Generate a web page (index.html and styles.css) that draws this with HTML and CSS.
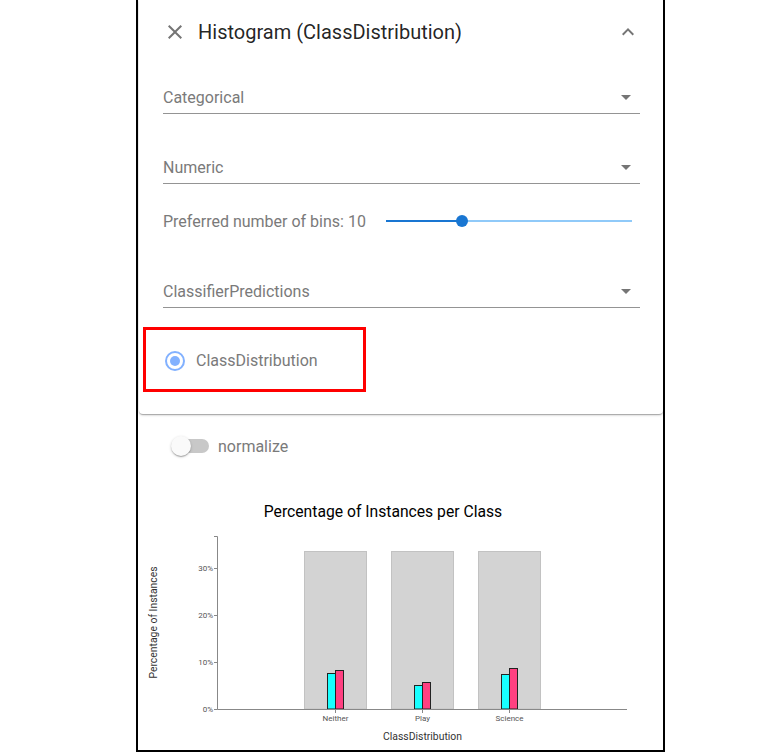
FILE: index.html
```html
<!DOCTYPE html>
<html>
<head>
<meta charset="utf-8">
<link rel="stylesheet" href="styles.css">
</head>
<body>
<div class="frame">
  <div class="card">
    <div class="header">
      <svg class="icon" viewBox="0 0 24 24"><path d="M19 6.41L17.59 5 12 10.59 6.41 5 5 6.41 10.59 12 5 17.59 6.41 19 12 13.41 17.59 19 19 17.59 13.41 12z"/></svg>
      <div class="title">Histogram (ClassDistribution)</div>
      <svg class="icon chevron" viewBox="0 0 24 24"><path d="M12 8l-6 6 1.41 1.41L12 10.83l4.59 4.58L18 14z"/></svg>
    </div>
    <div class="select first">
      <span class="select-label">Categorical</span>
      <svg class="icon arrow" viewBox="0 0 24 24"><path d="M7 10l5 5 5-5z"/></svg>
    </div>
    <div class="select second">
      <span class="select-label">Numeric</span>
      <svg class="icon arrow" viewBox="0 0 24 24"><path d="M7 10l5 5 5-5z"/></svg>
    </div>
    <div class="slider-row">
      <span class="slider-label">Preferred number of bins: 10</span>
      <div class="slider">
        <div class="track-active"></div>
        <div class="track-rest"></div>
        <div class="thumb"></div>
      </div>
    </div>
    <div class="select third">
      <span class="select-label">ClassifierPredictions</span>
      <svg class="icon arrow" viewBox="0 0 24 24"><path d="M7 10l5 5 5-5z"/></svg>
    </div>
    <div class="radio-box">
      <span class="radio"><span class="radio-dot"></span></span>
      <span class="radio-label">ClassDistribution</span>
    </div>
  </div>

  <div class="toggle-row">
    <div class="switch">
      <span class="switch-track"></span>
      <span class="switch-thumb"></span>
    </div>
    <span class="toggle-label">normalize</span>
  </div>

  <svg class="chart" width="525" height="270" viewBox="138 480 525 270">
    <text class="chart-title" x="383" y="518" text-anchor="middle">Percentage of Instances per Class</text>
    <text class="axis-title" x="0" y="0" text-anchor="middle" transform="translate(157 623.5) rotate(-90)">Percentage of Instances</text>

    <g class="bg-bars">
      <rect x="304.5" y="552.5" width="62" height="157.5"/>
      <rect x="391.5" y="552.5" width="62" height="157.5"/>
      <rect x="478.5" y="552.5" width="62" height="157.5"/>
    </g>

    <g class="bars">
      <rect class="cyan" x="327.5" y="674.5" width="8" height="35.5"/>
      <rect class="pink" x="335.5" y="671.5" width="8" height="38.5"/>
      <rect class="cyan" x="414.5" y="686.5" width="8" height="23.5"/>
      <rect class="pink" x="422.5" y="683.5" width="8" height="26.5"/>
      <rect class="cyan" x="501.5" y="675.5" width="8" height="34.5"/>
      <rect class="pink" x="509.5" y="669.5" width="8" height="40.5"/>
    </g>

    <path class="axis" d="M214 537.5H217.5V710.5H214"/>
    <path class="axis" d="M217.5 710.5H627"/>
    <path class="axis" d="M214 569.5H217.5M214 616.5H217.5M214 663.5H217.5"/>
    <path class="axis" d="M335.5 710.5V714M422.5 710.5V714M509.5 710.5V714"/>

    <g class="tick-labels" text-anchor="end">
      <text x="213" y="572">30%</text>
      <text x="213" y="619">20%</text>
      <text x="213" y="666">10%</text>
      <text x="213" y="713">0%</text>
    </g>
    <g class="tick-labels" text-anchor="middle">
      <text x="335.5" y="721.5">Neither</text>
      <text x="422.5" y="721.5">Play</text>
      <text x="509.5" y="721.5">Science</text>
    </g>
    <text class="axis-title" x="422.5" y="740.5" text-anchor="middle">ClassDistribution</text>
  </svg>
</div>
</body>
</html>
```

FILE: styles.css
```css
html, body {
  margin: 0;
  padding: 0;
  background: #ffffff;
  font-family: Roboto, "Liberation Sans", sans-serif;
}

.frame {
  margin-left: 136px;
  width: 525px;
  height: 750px;
  border-left: 2px solid #000;
  border-right: 2px solid #000;
  border-bottom: 2px solid #000;
  overflow: hidden;
}

.card {
  margin-left: 1px;
  width: 524px;
  box-sizing: border-box;
  padding: 0 23px 22px 24px;
  background: #fff;
  border-radius: 0 0 4px 4px;
  box-shadow: 0 1px 3px rgba(0,0,0,0.2), 0 1px 1px rgba(0,0,0,0.14), 0 2px 1px -1px rgba(0,0,0,0.12);
}

.header {
  height: 64px;
  display: flex;
  align-items: center;
}

.icon {
  width: 24px;
  height: 24px;
  fill: #757575;
  flex: none;
}

.title {
  margin-left: 11px;
  font-size: 20px;
  line-height: 24px;
  color: rgba(0,0,0,0.87);
  flex: 1;
}

.select {
  height: 32px;
  display: flex;
  align-items: center;
  border-bottom: 1px solid #949494;
}

.select.first { margin-top: 17px; }
.select.second { margin-top: 37px; }
.select.third { margin-top: 42px; }

.select-label {
  flex: 1;
  font-size: 16px;
  color: #7a7a7a;
}

.arrow {
  margin-right: 2px;
}

.slider-row {
  margin-top: 25px;
  height: 24px;
  display: flex;
  align-items: center;
}

.slider-label {
  font-size: 16px;
  color: #7a7a7a;
}

.slider {
  margin-left: auto;
  margin-right: 8px;
  width: 246px;
  height: 12px;
  display: flex;
  align-items: center;
  position: relative;
}

.track-active {
  width: 76px;
  height: 2px;
  background: #1976d2;
}

.track-rest {
  flex: 1;
  height: 2px;
  background: #90caf9;
}

.thumb {
  position: absolute;
  left: 70px;
  top: 0;
  width: 12px;
  height: 12px;
  border-radius: 50%;
  background: #1976d2;
}

.radio-box {
  margin-top: 19px;
  margin-left: -20px;
  width: 223px;
  height: 65px;
  box-sizing: border-box;
  border: 3px solid #ff0000;
  display: flex;
  align-items: center;
  padding-left: 19px;
  padding-top: 2px;
}

.radio {
  width: 20px;
  height: 20px;
  box-sizing: border-box;
  border: 2px solid #82b1ff;
  border-radius: 50%;
  display: flex;
  align-items: center;
  justify-content: center;
}

.radio-dot {
  width: 10px;
  height: 10px;
  border-radius: 50%;
  background: #82b1ff;
}

.radio-label {
  margin-left: 11px;
  font-size: 16px;
  color: #7a7a7a;
}

.toggle-row {
  margin-top: 22px;
  height: 20px;
  padding-left: 33px;
  display: flex;
  align-items: center;
}

.switch {
  position: relative;
  width: 38px;
  height: 20px;
  display: flex;
  align-items: center;
}

.switch-track {
  margin-left: 4px;
  width: 34px;
  height: 14px;
  border-radius: 7px;
  background: #c8c8c8;
}

.switch-thumb {
  position: absolute;
  left: 0;
  top: 0;
  width: 20px;
  height: 20px;
  border-radius: 50%;
  background: #fafafa;
  box-shadow: 0 1px 3px rgba(0,0,0,0.2), 0 1px 1px rgba(0,0,0,0.14), 0 2px 1px -1px rgba(0,0,0,0.12);
}

.toggle-label {
  margin-left: 9px;
  font-size: 16px;
  color: #7a7a7a;
}

.chart {
  display: block;
  margin-top: 23px;
}

.chart-title {
  font-size: 15.7px;
  fill: #000;
}

.axis-title {
  font-size: 10.4px;
  fill: #333;
}

.bg-bars rect {
  fill: #d3d3d3;
  stroke: #c2c2c2;
  stroke-width: 1;
}

.bars rect {
  stroke: #222;
  stroke-width: 1;
}

.bars .cyan { fill: #18ffff; }
.bars .pink { fill: #ff4081; }

.axis {
  fill: none;
  stroke: #888;
  stroke-width: 1;
}

.tick-labels text {
  font-size: 8px;
  fill: #555;
}
```
